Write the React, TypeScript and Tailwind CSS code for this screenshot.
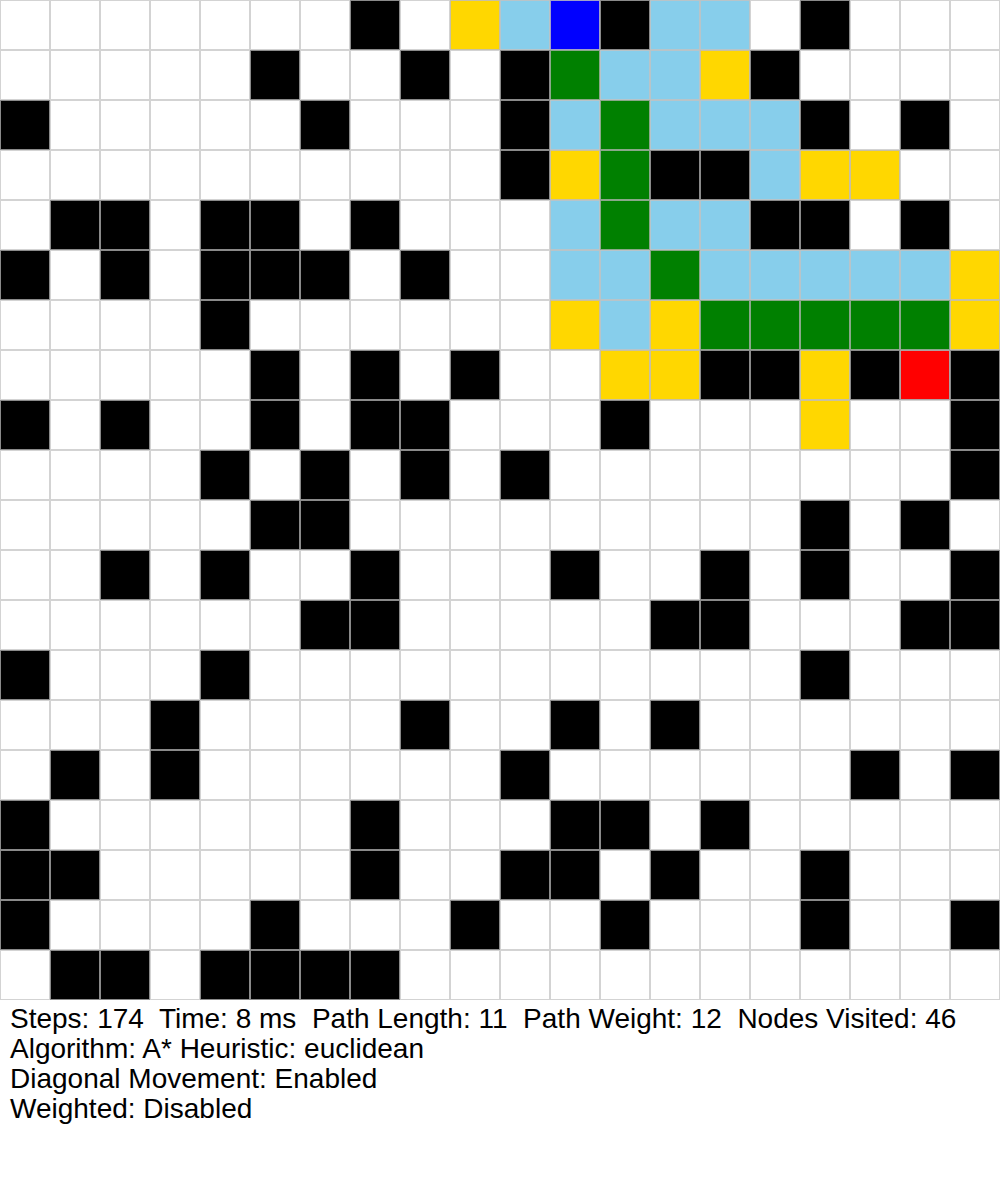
const ROWS = [
  ".......#.YLS#LL.#...",
  ".....#..#.#GLLY#....",
  "#.....#...#LGLLL#.#.",
  "..........#YG##LYY..",
  ".##.##.#...LGLL##.#.",
  "#.#.###.#..LLGLLLLLY",
  "....#......YLYGGGGGY",
  ".....#.#.#..YY##Y#E#",
  "#.#..#.##...#...Y..#",
  "....#.#.#.#........#",
  ".....##.........#.#.",
  "..#.#..#...#..#.#..#",
  "......##.....##...##",
  "#...#...........#...",
  "...#....#..#.#......",
  ".#.#......#......#.#",
  "#......#...##.#.....",
  "##.....#..##.#..#...",
  "#....#...#..#...#..#",
  ".##.####............",
];

const cellClass: Record<string, string> = {
  ".": "bg-white border-[#d3d3d3]",
  "#": "bg-black border-[#8a8a8a]",
  L: "bg-[#87ceeb] border-[#b8c4c8]",
  Y: "bg-[#ffd700] border-[#c8c0a0]",
  G: "bg-[#008000] border-[#8aa88a]",
  S: "bg-[#0000ff] border-[#a0a0c8]",
  E: "bg-[#ff0000] border-[#b0a0a0]",
};

export default function App() {
  return (
    <div className="w-[1000px] bg-white font-['Liberation_Sans',Arial,sans-serif] text-black">
      <div className="grid grid-cols-[repeat(20,50px)] grid-rows-[repeat(20,50px)]">
        {ROWS.flatMap((row, r) =>
          row.split("").map((c, i) => (
            <div key={`${r}-${i}`} className={`border ${cellClass[c]}`} />
          ))
        )}
      </div>
      <div className="pl-[10px] pt-1 text-[28px] leading-[30px] whitespace-pre">
        <div>Steps: 174  Time: 8 ms  Path Length: 11  Path Weight: 12  Nodes Visited: 46</div>
        <div>Algorithm: A* Heuristic: euclidean</div>
        <div>Diagonal Movement: Enabled</div>
        <div>Weighted: Disabled</div>
      </div>
    </div>
  );
}
